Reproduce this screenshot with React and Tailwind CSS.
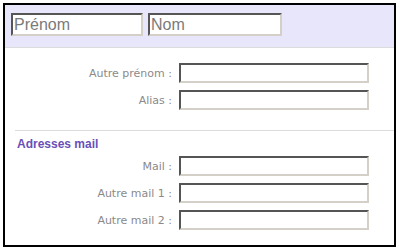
export default function App() {
  const inputCls =
    "box-border h-[20px] w-[190px] bg-white border-2 border-t-[#555555] border-l-[#555555] border-b-[#d4d0c8] border-r-[#d4d0c8] outline-none";
  const Row = ({ label }) => (
    <div className="flex items-center h-[20px]">
      <div className="w-[174px] text-right pr-[7px] text-[11px] leading-none text-[#8a8a8a] whitespace-nowrap [font-family:'DejaVu_Sans',sans-serif]">
        {label}
      </div>
      <input className={inputCls} />
    </div>
  );
  return (
    <div className="w-[399px] h-[251px] bg-white pt-[3px] pl-[3px]">
      <div className="box-border w-[393px] h-[244px] border-2 border-black flex flex-col">
        <div className="h-[43px] bg-[#e8e6fa] border-b border-[#dcdcdc] flex gap-[5px] pl-[6px] pt-[8px]">
          <input
            defaultValue="Prénom"
            className="box-border w-[132px] h-[23px] bg-white border-2 border-t-[#555555] border-l-[#555555] border-b-[#d4d0c8] border-r-[#d4d0c8] text-[16px] text-[#7a7a7a] px-[1px] outline-none [font-family:'Liberation_Sans',Arial,sans-serif]"
          />
          <input
            defaultValue="Nom"
            className="box-border w-[134px] h-[23px] bg-white border-2 border-t-[#555555] border-l-[#555555] border-b-[#d4d0c8] border-r-[#d4d0c8] text-[16px] text-[#7a7a7a] px-[1px] outline-none [font-family:'Liberation_Sans',Arial,sans-serif]"
          />
        </div>
        <div className="flex flex-col gap-[7px] pt-[15px]">
          <Row label="Autre prénom :" />
          <Row label="Alias :" />
        </div>
        <div className="ml-[10px] mt-[20px] border-t border-[#dcdcdc]" />
        <div className="pl-[12px] pt-[6px] text-[12px] font-bold leading-[14px] text-[#6a4fb8] [font-family:'Liberation_Sans',Arial,sans-serif]">
          Adresses mail
        </div>
        <div className="flex flex-col gap-[7px] pt-[5px]">
          <Row label="Mail :" />
          <Row label="Autre mail 1 :" />
          <Row label="Autre mail 2 :" />
        </div>
      </div>
    </div>
  );
}
